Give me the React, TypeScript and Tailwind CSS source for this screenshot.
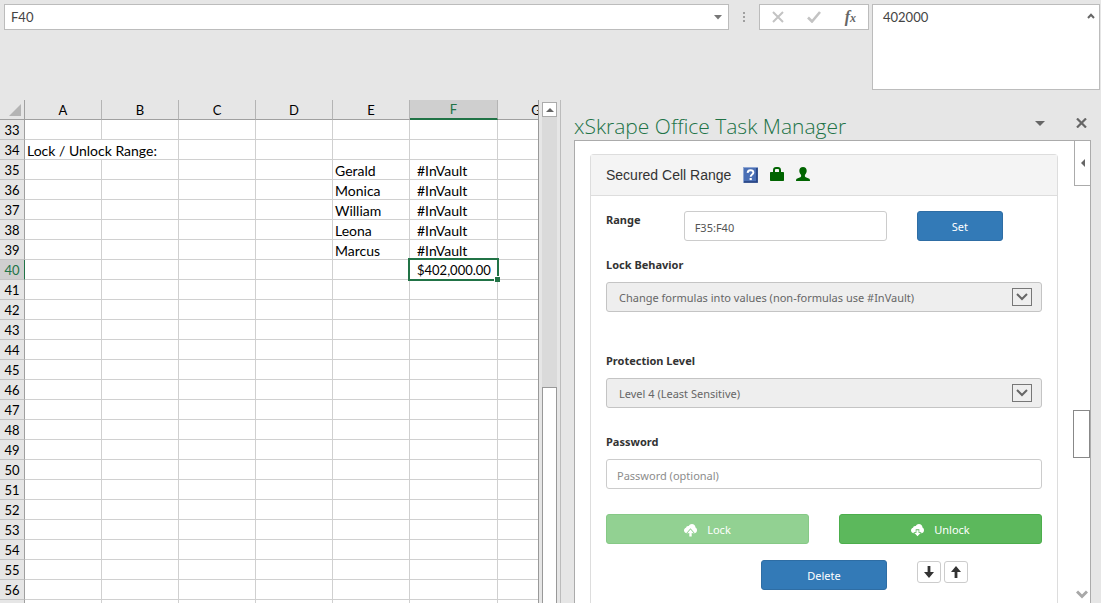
import { clsx } from "clsx";
import type { ReactNode } from "react";

const columns = ["A", "B", "C", "D", "E", "F", "G"];
const rows = Array.from({ length: 24 }, (_, i) => i + 33);

const cells: Record<string, string> = {
  A34: "Lock / Unlock Range:",
  E35: "Gerald",
  E36: "Monica",
  E37: "William",
  E38: "Leona",
  E39: "Marcus",
  F35: "#InVault",
  F36: "#InVault",
  F37: "#InVault",
  F38: "#InVault",
  F39: "#InVault",
  F40: "$402,000.00",
};

const FormulaBar = () => {
  return (
    <div className="flex items-start pt-1 pr-px pb-2.5 pl-1 text-[13px] text-[#444]">
      {/* Name Box */}
      <div className="flex h-[26px] min-w-0 flex-1 items-center border border-[#bcbcbc] bg-white pr-1.5 pl-1.5">
        <input
          aria-label="Name box"
          defaultValue="F40"
          className="min-w-0 flex-1 bg-transparent pt-0.5 outline-none"
        />
        <button aria-label="Show names">
          <svg width="8" height="5" viewBox="0 0 8 5" fill="#777">
            <path d="M0 0h8L4 4.5z" />
          </svg>
        </button>
      </div>
      <svg width="30" height="26" viewBox="0 0 30 26" fill="#a0a0a0">
        <path d="M14 8h2v2h-2zM14 12h2v2h-2zM14 16h2v2h-2z" />
      </svg>
      {/* Cancel, Enter, Insert Function */}
      <div className="mr-[3px] flex h-[26px] w-[110px] items-center justify-between border border-[#bcbcbc] bg-white px-3">
        <button aria-label="Cancel">
          <svg width="12" height="12" viewBox="0 0 12 12" fill="none" stroke="#c3c3c3" strokeWidth="2">
            <path d="M1 1l10 10M11 1L1 11" />
          </svg>
        </button>
        <button aria-label="Enter">
          <svg width="14" height="12" viewBox="0 0 14 12" fill="none" stroke="#c3c3c3" strokeWidth="2.6">
            <path d="M1 6.5l4 4L13 1" />
          </svg>
        </button>
        <button
          aria-label="Insert function"
          className="font-['Liberation_Serif',serif] text-base leading-4 font-bold text-[#666] italic"
        >
          f<span className="text-xs">x</span>
        </button>
      </div>
      {/* Formula */}
      <div className="flex h-[86px] w-[228px] items-start border border-[#bcbcbc] bg-white pr-1">
        <textarea
          aria-label="Formula"
          defaultValue="402000"
          className="h-full min-w-0 flex-1 resize-none bg-transparent px-2.5 pt-0.5 leading-5 outline-none"
        />
        <button aria-label="Collapse formula bar" className="pt-2">
          <svg width="8" height="6" viewBox="0 0 8 6" fill="none" stroke="#666" strokeWidth="2">
            <path d="M1 5l3-3.2L7 5" />
          </svg>
        </button>
      </div>
    </div>
  );
};

const Cell = ({ id }: { id: string }) => {
  const selected = id === "F40";
  return (
    <td
      colSpan={id === "A34" ? 2 : 1}
      className={clsx(
        "h-5 border-r border-b border-[#d0d0d0] p-0 pt-0.5 whitespace-nowrap",
        id[0] === "F" ? "pl-[7px]" : "pl-0.5",
        selected ? "relative" : "text-sm leading-[17px]",
      )}
    >
      {cells[id]}
      {selected && (
        <span className="absolute -inset-0.5 border-2 border-[#217346]">
          <span className="absolute -right-[3px] -bottom-[3px] h-1.5 w-1.5 border-t border-l border-white bg-[#217346]" />
        </span>
      )}
    </td>
  );
};

const Sheet = () => {
  return (
    <div className="flex min-w-0 flex-1 overflow-hidden border-r border-[#bcbcbc]">
      <div className="min-w-0 flex-1 overflow-hidden">
        <table className="w-[575px] table-fixed border-separate border-spacing-0 bg-white text-[13px] leading-[17px] text-black">
          <colgroup>
            <col className="w-[25px]" />
            {columns.map((c) => (
              <col key={c} className={c === "F" ? "w-[88px]" : "w-[77px]"} />
            ))}
          </colgroup>
          <thead>
            <tr>
              <th
                aria-label="Select all"
                className="h-5 border-r border-b border-[#a0a0a0] bg-[#e6e6e6] p-0"
              >
                <svg className="ml-[9px]" width="12" height="12" viewBox="0 0 12 12" fill="#b4b4b4">
                  <path d="M12 0v12H0z" />
                </svg>
              </th>
              {columns.map((c) => (
                <th
                  key={c}
                  className={clsx(
                    "h-5 border-r p-0 pt-px font-normal",
                    c === "F"
                      ? "border-b-2 border-r-[#b4b4b4] border-b-[#217346] bg-[#cfcfcf] text-[#217346]"
                      : "border-b border-r-[#b4b4b4] border-b-[#a0a0a0] bg-[#e6e6e6]",
                  )}
                >
                  {c}
                </th>
              ))}
            </tr>
          </thead>
          <tbody>
            {rows.map((r) => (
              <tr key={r}>
                <th
                  className={clsx(
                    "h-5 border-r border-b border-b-[#c4c4c4] p-0 pt-0.5 text-center font-normal",
                    r === 40
                      ? "border-r-[#217346] bg-[#cfcfcf] text-[#217346]"
                      : "border-r-[#a0a0a0] bg-[#e6e6e6]",
                  )}
                >
                  {r}
                </th>
                {columns
                  .filter((c) => c + r !== "B34")
                  .map((c) => (
                    <Cell key={c} id={c + r} />
                  ))}
              </tr>
            ))}
            {/* Partly hidden last row */}
            <tr aria-hidden="true">
              <td className="h-5 border-r border-[#a0a0a0] bg-[#e6e6e6] p-0" />
              {columns.map((c) => (
                <td key={c} className="h-5 border-r border-[#d0d0d0] p-0" />
              ))}
            </tr>
          </tbody>
        </table>
      </div>
      {/* Scrollbar */}
      <div className="flex w-[22px] flex-col border-l border-[#999] px-[3px] pt-0.5">
        <button
          aria-label="Scroll up"
          className="flex h-[15px] shrink-0 items-center justify-center border border-[#ababab] bg-white"
        >
          <svg width="8" height="4" viewBox="0 0 8 4" fill="#666">
            <path d="M4 0l4 4H0z" />
          </svg>
        </button>
        <div className="flex-[34] bg-[#dadada]" />
        <div className="flex-[27] border border-b-0 border-[#999] bg-white" />
      </div>
    </div>
  );
};

const HelpIcon = () => (
  <svg width="15" height="16" viewBox="0 0 15 16">
    <rect x="0.5" y="0.5" width="14" height="15" fill="#4a6fb5" stroke="#8ea6d2" />
    <path d="M1 15h13V1" fill="none" stroke="#24407f" strokeWidth="1.6" />
    <path
      d="M4.6 5.8C4.8 3.8 6 3.2 7.5 3.2c1.7 0 2.9.9 2.9 2.4 0 2-2.7 2-2.7 4.2"
      fill="none"
      stroke="#fff"
      strokeWidth="1.9"
    />
    <path d="M6.6 11h2.2v2.1H6.6z" fill="#fff" />
  </svg>
);

const LockIcon = () => (
  <svg width="14" height="14" viewBox="0 0 14 14" fill="#006400">
    <path d="M3 5V3.200C3 1.200 4.200 0 6 0h2c1.800 0 3 1.200 3 3.200V5h2.300c.4 0 .7.3.7.7v7.600c0 .4-.3.7-.7.7H.7c-.4 0-.7-.3-.7-.7V5.700C0 5.300.3 5 .7 5zm2 0h4V3.300C9 2.500 8.600 2 7.900 2H6.100C5.400 2 5 2.500 5 3.300z" />
  </svg>
);

const UserIcon = () => (
  <svg width="14" height="14" viewBox="0 0 14 14" fill="#006400">
    <path d="M7 0c2.300 0 3.700 1.600 3.700 3.800 0 1.700-.8 3.200-1.800 4.100v1.300c0 .5.3.8.8 1l3.100 1.300c.8.4 1.200 1 1.200 2.500H0c0-1.500.4-2.100 1.200-2.500l3.100-1.300c.5-.2.8-.5.8-1V7.900c-1-.9-1.800-2.400-1.800-4.100C3.300 1.600 4.700 0 7 0z" />
  </svg>
);

const cloudPath =
  "M3.200 9.200C1.400 9.200 0 8 0 6.400c0-1.300.9-2.300 2.100-2.600C2.200 2.700 3 2 4 2c.3 0 .5 0 .7.100C5.400.800 6.500 0 7.900 0c2 0 3.500 1.500 3.600 3.500C12.400 4 13 5 13 6.200c0 1.700-1.200 3-2.900 3z";

const CloudUpIcon = () => (
  <svg width="13" height="13" viewBox="0 0 13 13">
    <path d={cloudPath} fill="#fff" />
    <path d="M6.500 4.200L10.600 9H8.300v4H4.700V9H2.400z" className="fill-[#92d192]" />
    <path d="M6.500 5.400L9.500 9H7.700v3.500H5.300V9H3.500z" fill="#fff" />
  </svg>
);

const CloudDownIcon = () => (
  <svg width="13" height="13" viewBox="0 0 13 13">
    <path d={cloudPath} fill="#fff" />
    <path d="M4.700 5.300h3.600v3h2.300L6.500 13 2.400 8.300h2.300z" className="fill-[#5cb85c]" />
    <path d="M5.400 6.200h2.200v2.900h1.900L6.500 12.300 3.500 9.100h1.900z" fill="#fff" />
  </svg>
);

const DisabledSelect = ({ id, value }: { id: string; value: string }) => {
  return (
    <div className="relative">
      <select
        id={id}
        disabled
        className="block h-[30px] w-full appearance-none rounded-[3px] border border-[#c4c4c4] bg-[#eee] pt-0.5 pr-10 pl-3 text-[#666] opacity-100"
      >
        <option>{value}</option>
      </select>
      <span className="pointer-events-none absolute top-1.5 right-2.5 flex h-[18px] w-5 items-center justify-center border border-[#777]">
        <svg width="12" height="8" viewBox="0 0 12 8" fill="none" stroke="#666" strokeWidth="2">
          <path d="M1 1l5 5 5-5" />
        </svg>
      </span>
    </div>
  );
};

const Label = ({ htmlFor, children }: { htmlFor: string; children: ReactNode }) => (
  <label htmlFor={htmlFor} className="mb-[7px] block h-5 font-bold text-[#333]">
    {children}
  </label>
);

const SecuredRangeCard = () => {
  return (
    <section className="mt-[13px] ml-[15px] min-w-0 flex-1 rounded-t border border-b-0 border-[#ddd]">
      {/* Card Header */}
      <div className="flex h-[41px] items-center border-b border-[#ddd] bg-[#f4f4f4] px-[15px]">
        <h2 className="font-['Liberation_Sans',sans-serif] text-sm text-[#333]">
          Secured Cell Range
        </h2>
        <div className="ml-3 flex items-end gap-3">
          <HelpIcon />
          <div className="flex gap-3 self-start">
            <LockIcon />
            <UserIcon />
          </div>
        </div>
      </div>
      {/* Card Body */}
      <div className="pt-[15px]">
        <div className="grid grid-cols-12">
          <label htmlFor="range" className="col-span-2 pl-[15px] leading-[18px] font-bold text-[#333]">
            Range
          </label>
          <div className="col-span-6 px-[15px]">
            <input
              id="range"
              defaultValue="F35:F40"
              className="block h-[30px] w-full rounded-[3px] border border-[#ccc] px-2.5 pt-0.5 text-[#555]"
            />
          </div>
          <div className="col-span-3 px-[15px]">
            <button className="h-[30px] w-full rounded-[3px] border border-[#2e6da4] bg-[#337ab7] pt-0.5 text-white">
              Set
            </button>
          </div>
        </div>
        <div className="mt-3.5 px-[15px]">
          <Label htmlFor="behavior">Lock Behavior</Label>
          <DisabledSelect
            id="behavior"
            value="Change formulas into values (non-formulas use #InVault)"
          />
        </div>
        <div className="mt-[39px] px-[15px]">
          <Label htmlFor="level">Protection Level</Label>
          <DisabledSelect id="level" value="Level 4 (Least Sensitive)" />
        </div>
        <div className="mt-6 px-[15px]">
          <Label htmlFor="password">Password</Label>
          <input
            id="password"
            type="password"
            placeholder="Password (optional)"
            className="block h-[30px] w-full rounded-[3px] border border-[#ccc] px-2.5 pt-0.5 placeholder:text-[#8c8c8c]"
          />
        </div>
        {/* Buttons */}
        <div className="mt-[25px] grid grid-cols-2">
          <div className="px-[15px]">
            <button
              disabled
              className="flex h-[30px] w-full items-center justify-center gap-2.5 rounded-[3px] border border-[#86c986] bg-[#92d192] pt-0.5 text-white"
            >
              <CloudUpIcon />
              Lock
            </button>
          </div>
          <div className="px-[15px]">
            <button className="flex h-[30px] w-full items-center justify-center gap-2.5 rounded-[3px] border border-[#4cae4c] bg-[#5cb85c] pt-0.5 text-white">
              <CloudDownIcon />
              Unlock
            </button>
          </div>
        </div>
        <div className="mt-4 grid grid-cols-12">
          <div className="col-span-4 col-start-5 px-[15px]">
            <button className="h-[30px] w-full rounded-[3px] border border-[#2e6da4] bg-[#337ab7] pt-0.5 text-white">
              Delete
            </button>
          </div>
          <div className="col-span-4 flex gap-[3px] pt-px pl-[15px]">
            <button
              aria-label="Move down"
              className="flex h-[22px] w-6 items-center justify-center rounded-[3px] border border-[#ccc] bg-white"
            >
              <svg width="10" height="12" viewBox="0 0 10 12" fill="#333">
                <path d="M3.600 0h2.800v6H10l-5 6-5-6h3.600z" />
              </svg>
            </button>
            <button
              aria-label="Move up"
              className="flex h-[22px] w-6 items-center justify-center rounded-[3px] border border-[#ccc] bg-white"
            >
              <svg width="10" height="12" viewBox="0 0 10 12" fill="#333">
                <path d="M5 0l5 6H6.400v6H3.600V6H0z" />
              </svg>
            </button>
          </div>
        </div>
      </div>
    </section>
  );
};

const TaskPane = () => {
  return (
    <aside className="flex w-[540px] shrink-0 flex-col pr-2.5 pl-[13px] font-['Noto_Sans',sans-serif] text-[11px] leading-5">
      {/* Title */}
      <header className="flex h-10 shrink-0 items-center pt-3 pr-1">
        <h1 className="flex-1 font-['Open_Sans',sans-serif] text-[21px] font-light text-[#217346]">
          xSkrape Office Task Manager
        </h1>
        <button aria-label="Task pane options" className="mr-[31px] pb-1.5">
          <svg width="10" height="5" viewBox="0 0 10 5" fill="#666">
            <path d="M0 0h10L5 5z" />
          </svg>
        </button>
        <button aria-label="Close" className="pb-1.5">
          <svg width="11" height="10" viewBox="0 0 11 10" fill="none" stroke="#666" strokeWidth="2.200">
            <path d="M1 .5l9 9M10 .5l-9 9" />
          </svg>
        </button>
      </header>
      {/* Pane Body */}
      <div className="flex min-h-0 flex-1 gap-[15px] overflow-hidden border border-b-0 border-[#ababab] bg-white">
        <SecuredRangeCard />
        <div className="flex w-[17px] flex-col">
          <button
            aria-label="Expand"
            className="ml-px flex h-[45px] shrink-0 items-center justify-center border border-t-0 border-r-0 border-[#ababab]"
          >
            <svg width="4" height="8" viewBox="0 0 4 8" fill="#666">
              <path d="M4 0v8L0 4z" />
            </svg>
          </button>
          <div className="flex-[17]" />
          <div className="h-12 border border-[#888]" />
          <div className="flex-[10]" />
          <button aria-label="Scroll down" className="flex justify-center pb-1">
            <svg width="12" height="9" viewBox="0 0 12 9" fill="none" stroke="#a8a8a8" strokeWidth="3">
              <path d="M1 1.500l5 5 5-5" />
            </svg>
          </button>
        </div>
      </div>
    </aside>
  );
};

const App = () => {
  return (
    <div className="flex h-screen flex-col overflow-hidden bg-[#e6e6e6] font-['Lato',sans-serif]">
      <FormulaBar />
      <main className="flex min-h-0 flex-1">
        <Sheet />
        <TaskPane />
      </main>
    </div>
  );
};

export default App;
